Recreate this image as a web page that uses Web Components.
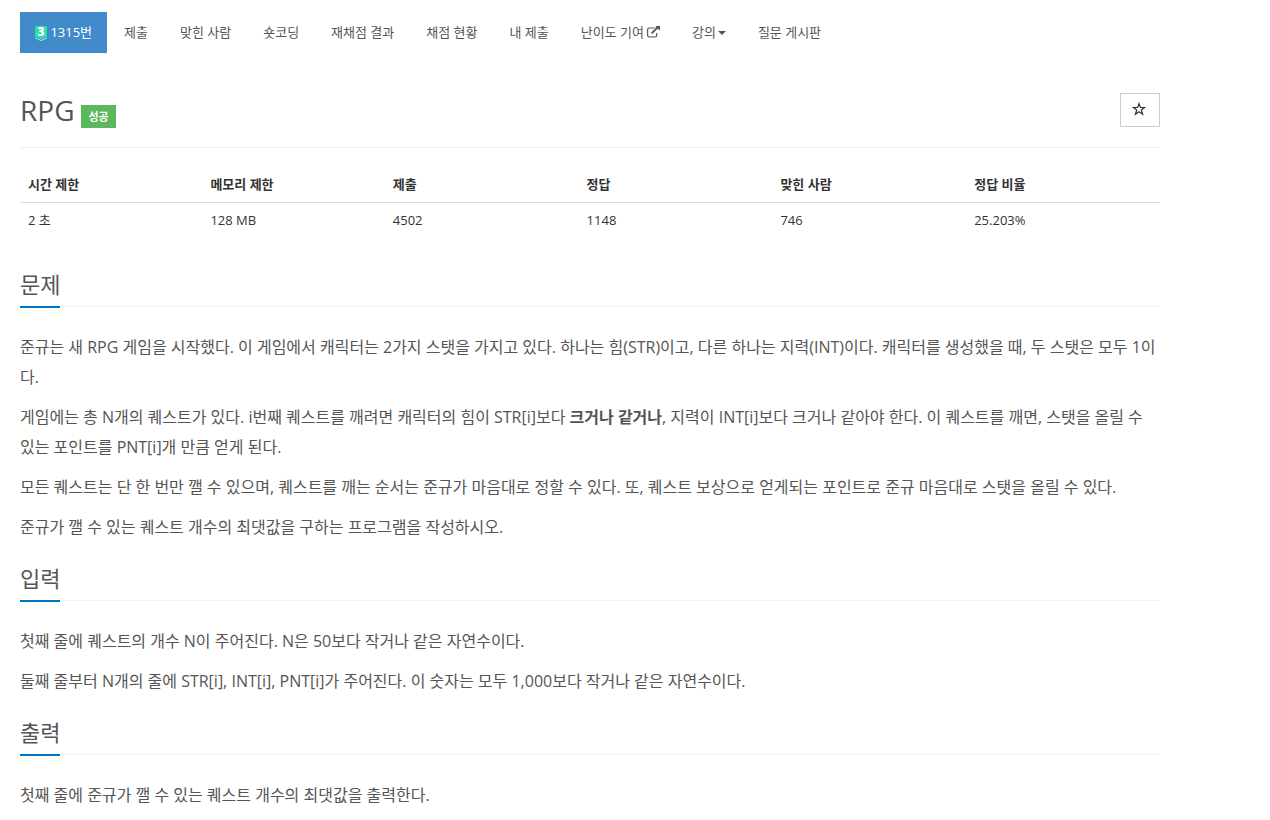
<!DOCTYPE html>
<html lang="ko">
<head>
<meta charset="utf-8">
<title>1315번: RPG</title>
<style>
  body {
    margin: 0;
    background: #fff;
    color: #333;
    font: 13px/1.6 "Open Sans", "Noto Sans CJK KR", sans-serif;
  }
</style>
</head>
<body>
<problem-page>
  <problem-menu slot="menu">
    <menu-item active><tier-badge level="3"></tier-badge> 1315번</menu-item>
    <menu-item>제출</menu-item>
    <menu-item>맞힌 사람</menu-item>
    <menu-item>숏코딩</menu-item>
    <menu-item>재채점 결과</menu-item>
    <menu-item>채점 현황</menu-item>
    <menu-item>내 제출</menu-item>
    <menu-item icon="external">난이도 기여</menu-item>
    <menu-item icon="caret">강의</menu-item>
    <menu-item>질문 게시판</menu-item>
  </problem-menu>
  <problem-title status="성공">RPG</problem-title>
  <problem-info></problem-info>
  <problem-section headline="문제">
    <p>준규는 새 RPG 게임을 시작했다. 이 게임에서 캐릭터는 2가지 스탯을 가지고 있다. 하나는 힘(STR)이고, 다른 하나는 지력(INT)이다. 캐릭터를 생성했을 때, 두 스탯은 모두 1이다.</p>
    <p>게임에는 총 N개의 퀘스트가 있다. i번째 퀘스트를 깨려면 캐릭터의 힘이 STR[i]보다 <strong>크거나 같거나</strong>, 지력이 INT[i]보다 크거나 같아야 한다. 이 퀘스트를 깨면, 스탯을 올릴 수 있는 포인트를 PNT[i]개 만큼 얻게 된다.</p>
    <p>모든 퀘스트는 단 한 번만 깰 수 있으며, 퀘스트를 깨는 순서는 준규가 마음대로 정할 수 있다. 또, 퀘스트 보상으로 얻게되는 포인트로 준규 마음대로 스탯을 올릴 수 있다.</p>
    <p>준규가 깰 수 있는 퀘스트 개수의 최댓값을 구하는 프로그램을 작성하시오.</p>
  </problem-section>
  <problem-section headline="입력">
    <p>첫째 줄에 퀘스트의 개수 N이 주어진다. N은 50보다 작거나 같은 자연수이다.</p>
    <p>둘째 줄부터 N개의 줄에 STR[i], INT[i], PNT[i]가 주어진다. 이 숫자는 모두 1,000보다 작거나 같은 자연수이다.</p>
  </problem-section>
  <problem-section headline="출력">
    <p>첫째 줄에 준규가 깰 수 있는 퀘스트 개수의 최댓값을 출력한다.</p>
  </problem-section>
</problem-page>

<script>
const icons = {
  external: `<svg width="13" height="12" viewBox="0 0 13 12" fill="none" stroke="currentColor">
    <path d="M7.5 2H2.3Q.6 2 .6 3.700V9.300Q.6 11 2.300 11H8Q9.700 11 9.700 9.300V7" stroke-width="1.2"/>
    <path d="M4.600 7.400L10.500 1.500" stroke-width="1.900"/>
    <path d="M8.300 0H13V4.700Z" fill="currentColor" stroke="none"/></svg>`,
  caret: `<svg class="caret" width="8" height="4" viewBox="0 0 8 4"><path d="M0 0H8L4 4Z" fill="currentColor"/></svg>`,
}

class ProblemPage extends HTMLElement {
  constructor() {
    super()
    this.attachShadow({ mode: 'open' }).innerHTML = `<style>
      :host {
        display: block;
        box-sizing: border-box;
        width: 1180px;
        height: 820px;
        padding: 12px 20px 0;
        overflow: hidden;
      }
    </style>
    <slot name="menu"></slot>
    <slot></slot>`
  }
}

class ProblemMenu extends HTMLElement {
  constructor() {
    super()
    this.attachShadow({ mode: 'open' }).innerHTML = `<style>
      :host {
        display: flex;
        gap: 2px;
        height: 41px;
      }
    </style>
    <slot></slot>`
  }
}

class MenuItem extends HTMLElement {
  constructor() {
    super()
    const icon = this.getAttribute('icon')
    this.attachShadow({ mode: 'open' }).innerHTML = `<style>
      :host {
        display: block;
        box-sizing: border-box;
        height: 41px;
        padding: 10px 15px;
        line-height: 20px;
        color: #555;
        white-space: nowrap;
        cursor: pointer;
      }
      :host([active]) {
        padding-left: 14px;
        background: #428bca;
        color: #fff;
      }
      svg {
        vertical-align: -1px;
        margin-left: 3px;
      }
      svg.caret {
        vertical-align: 2px;
        margin-left: 2px;
      }
    </style><slot></slot>${icons[icon] || ''}`
  }
}

class TierBadge extends HTMLElement {
  constructor() {
    super()
    this.attachShadow({ mode: 'open' }).innerHTML = `<style>
      :host {
        display: inline-block;
        width: 13px;
        height: 15px;
        vertical-align: -4px;
      }
      svg {
        display: block;
      }
      text {
        font: 800 12px "Open Sans", sans-serif;
      }
    </style>
    <svg width="13" height="15" viewBox="0 0 13 15">
      <path d="M1 0H13V10.700L7 13.200L1 10.700Z" fill="#27e2a4"/>
      <path d="M1 11.400L7 13.900L13 11.400V12.300L7 14.900L1 12.300Z" fill="#a9f5da"/>
      <text x="7" y="10.300" text-anchor="middle" fill="#fff">${this.getAttribute('level')}</text>
    </svg>`
  }
}

class ProblemTitle extends HTMLElement {
  constructor() {
    super()
    this.attachShadow({ mode: 'open' }).innerHTML = `<style>
      :host {
        display: flex;
        justify-content: space-between;
        height: 54px;
        margin-top: 40px;
        border-bottom: 1px solid #eee;
      }
      .name {
        display: flex;
        gap: 7px;
      }
      h1 {
        margin: 0;
        font-size: 28px;
        font-weight: 400;
        line-height: 34px;
        color: #555;
      }
      .label {
        box-sizing: border-box;
        height: 23px;
        margin-top: 12px;
        padding: 0 7px;
        background: #5cb85c;
        color: #fff;
        font-size: 11px;
        font-weight: 700;
        line-height: 23px;
      }
      button {
        width: 40px;
        height: 34px;
        padding: 0;
        border: 1px solid #ccc;
        background: #fff;
        color: #333;
      }
      svg {
        display: block;
        margin: -2px auto 0 11px;
      }
    </style>
    <div class="name">
      <h1><slot></slot></h1>
      <span class="label">${this.getAttribute('status')}</span>
    </div>
    <button aria-label="즐겨찾기">
      <svg width="14" height="14" viewBox="0 0 14 14" fill="none" stroke="currentColor" stroke-width="1.200">
        <path d="M7 1.600L8.400 5.500H12.700L9.300 8L10.600 12.200L7 9.700L3.400 12.200L4.700 8L1.300 5.500H5.600Z"/>
      </svg>
    </button>`
  }
}

class ProblemInfo extends HTMLElement {
  constructor() {
    super()
    const rows = [
      ['시간 제한', '2 초', 16],
      ['메모리 제한', '128 MB', 16],
      ['제출', '4502', 17],
      ['정답', '1148', 17],
      ['맞힌 사람', '746', 17],
      ['정답 비율', '25.203%', 17],
    ]
    this.attachShadow({ mode: 'open' }).innerHTML = `<style>
      :host {
        display: block;
        margin-top: 18px;
        margin-bottom: 30px;
      }
      table {
        width: 100%;
        table-layout: fixed;
        border-collapse: collapse;
      }
      th, td {
        height: 21px;
        padding: 8px;
        line-height: 21px;
        text-align: left;
      }
      th {
        padding-bottom: 7px;
        border-bottom: 1px solid #ddd;
        font-weight: 700;
      }
      td {
        padding-top: 7px;
      }
    </style>
    <table>
      <thead><tr>${rows.map(r => `<th style="width: ${r[2]}%; box-sizing: border-box">${r[0]}</th>`).join('')}</tr></thead>
      <tbody><tr>${rows.map(r => `<td>${r[1]}</td>`).join('')}</tr></tbody>
    </table>`
  }
}

class ProblemSection extends HTMLElement {
  constructor() {
    super()
    this.attachShadow({ mode: 'open' }).innerHTML = `<style>
      :host {
        display: block;
        margin-bottom: 21px;
      }
      .headline {
        display: flex;
        height: 37px;
        margin-bottom: 25px;
        border-bottom: 1px dotted #e4e9f0;
      }
      h2 {
        height: 37px;
        margin: 0;
        border-bottom: 2px solid #0076c0;
        color: #555;
        font-size: 22px;
        font-weight: 400;
        line-height: 31px;
      }
      .text {
        display: flex;
        flex-direction: column;
        gap: 10px;
        color: #555;
        font-size: 16px;
        line-height: 30px;
      }
      ::slotted(p) {
        margin: 0;
      }
    </style>
    <div class="headline"><h2>${this.getAttribute('headline')}</h2></div>
    <div class="text"><slot></slot></div>`
  }
}

customElements.define('tier-badge', TierBadge)
customElements.define('menu-item', MenuItem)
customElements.define('problem-menu', ProblemMenu)
customElements.define('problem-title', ProblemTitle)
customElements.define('problem-info', ProblemInfo)
customElements.define('problem-section', ProblemSection)
customElements.define('problem-page', ProblemPage)
</script>
</body>
</html>
